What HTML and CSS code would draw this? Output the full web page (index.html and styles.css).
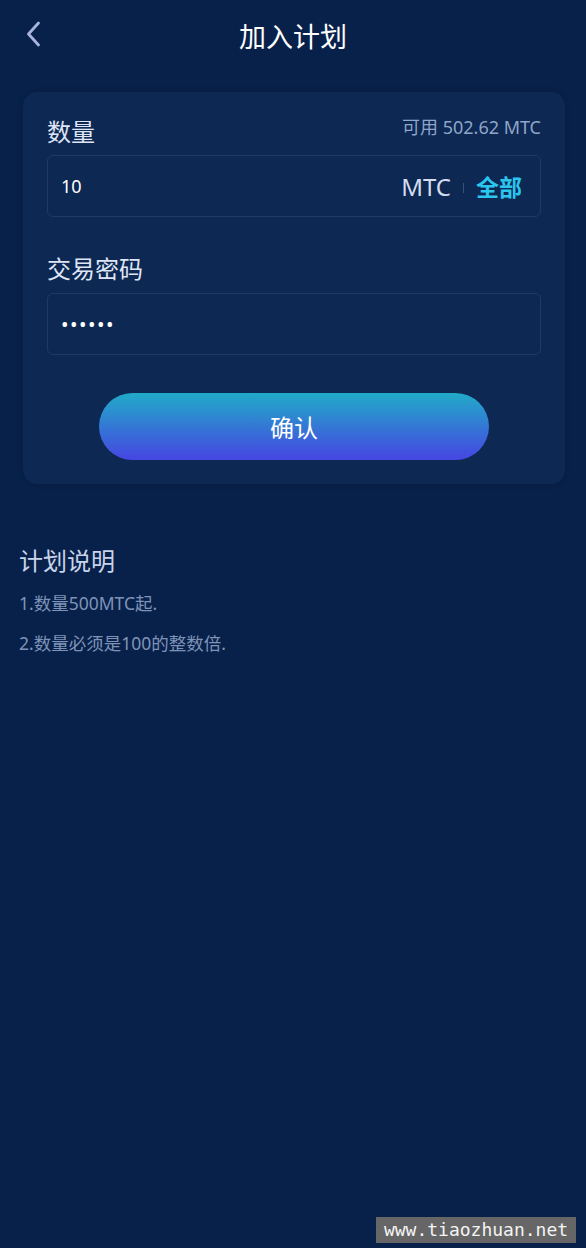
FILE: index.html
```html
<!DOCTYPE html>
<html lang="zh-CN">
<head>
    <meta charset="UTF-8">
    <meta name="viewport" content="width=device-width, initial-scale=1.0">
    <title>加入计划</title>
    <link rel="stylesheet" href="styles.css">
</head>
<body>
    <header class="topbar">
        <a class="voltar" href="#">
            <svg width="18" height="26" viewBox="0 0 18 26">
                <path d="M14.5 2 L4.5 13 L14.5 24" fill="none" stroke="#a9b4dc" stroke-width="2.8" stroke-linecap="round" stroke-linejoin="round"/>
            </svg>
        </a>
        <h1>加入计划</h1>
    </header>

    <div class="cartao">
        <div class="linha-rotulo">
            <label for="quantidade">数量</label>
            <span class="saldo">可用 502.62 MTC</span>
        </div>
        <div class="campo">
            <input id="quantidade" type="text" value="10">
            <span class="moeda">MTC</span>
            <span class="divisor"></span>
            <button type="button" class="tudo">全部</button>
        </div>

        <div class="linha-rotulo segundo">
            <label for="senha">交易密码</label>
        </div>
        <div class="campo">
            <input id="senha" type="password" value="123456">
        </div>

        <button type="submit" class="confirmar">确认</button>
    </div>

    <section class="explicacao">
        <h2>计划说明</h2>
        <p>1.数量500MTC起.</p>
        <p>2.数量必须是100的整数倍.</p>
    </section>

    <div class="marca">www.tiaozhuan.net</div>
</body>
</html>
```

FILE: styles.css
```css
body {
    margin: 0;
    min-height: 1248px;
    background-color: #08214a;
    font-family: "Noto Sans", "Noto Sans CJK SC", sans-serif;
    color: #dfe5f5;
    position: relative;
}

.topbar {
    height: 70px;
    display: flex;
    align-items: center;
    justify-content: center;
    position: relative;
}

.topbar h1 {
    margin: 0;
    font-size: 27px;
    font-weight: normal;
    color: #ffffff;
}

.voltar {
    position: absolute;
    left: 24px;
    top: 21px;
    display: flex;
}

.cartao {
    margin: 22px 21px 0 23px;
    padding: 20px 24px 24px 24px;
    background-color: #0d2852;
    border-radius: 14px;
    box-shadow: 0 0 6px rgba(0, 0, 0, 0.15);
}

.linha-rotulo {
    height: 36px;
    display: flex;
    align-items: center;
    justify-content: space-between;
    margin-bottom: 7px;
}

.linha-rotulo.segundo {
    margin-top: 32px;
    margin-bottom: 8px;
}

.linha-rotulo label {
    font-size: 24px;
    color: #dfe5f5;
}

.saldo {
    font-size: 18px;
    color: #8fa5c9;
    margin-top: -8px;
}

.campo {
    height: 60px;
    border: 1px solid #1f3a66;
    border-radius: 6px;
    display: flex;
    align-items: center;
    padding: 0 18px 0 13px;
}

.campo input {
    flex: 1;
    min-width: 0;
    background: transparent;
    border: none;
    outline: none;
    color: #ffffff;
    font-family: "Noto Sans", "Noto Sans CJK SC", sans-serif;
    font-size: 18px;
    padding: 0;
}

#senha {
    font-size: 20px;
    letter-spacing: 1.5px;
}

.moeda {
    font-size: 24px;
    color: #d5ddf0;
}

.divisor {
    width: 1px;
    height: 10px;
    background-color: #3a4f74;
    margin: 4px 12px 0 12px;
}

.tudo {
    background: none;
    border: none;
    padding: 0;
    font-family: "Noto Sans CJK SC", sans-serif;
    font-size: 23px;
    font-weight: bold;
    color: #2bc6f0;
    cursor: pointer;
}

.confirmar {
    display: block;
    width: 390px;
    height: 67px;
    margin: 38px auto 0 auto;
    border: none;
    border-radius: 34px;
    background: linear-gradient(to bottom, #21abc8, #4645e2);
    color: #ffffff;
    font-family: "Noto Sans CJK SC", sans-serif;
    font-size: 24px;
    cursor: pointer;
}

.explicacao {
    padding: 62px 19px 0 19px;
}

.explicacao h2 {
    margin: 0 0 7px 0;
    font-size: 24px;
    font-weight: normal;
    line-height: 30px;
    color: #c8d4ea;
}

.explicacao p {
    margin: 0;
    font-size: 17.5px;
    line-height: 40px;
    color: #7f93b8;
}

.marca {
    position: absolute;
    right: 10px;
    top: 1217px;
    width: 200px;
    height: 26px;
    background-color: #666666;
    color: #f4f4f4;
    font-family: "DejaVu Sans Mono", monospace;
    font-size: 18px;
    line-height: 26px;
    text-align: center;
}
```
